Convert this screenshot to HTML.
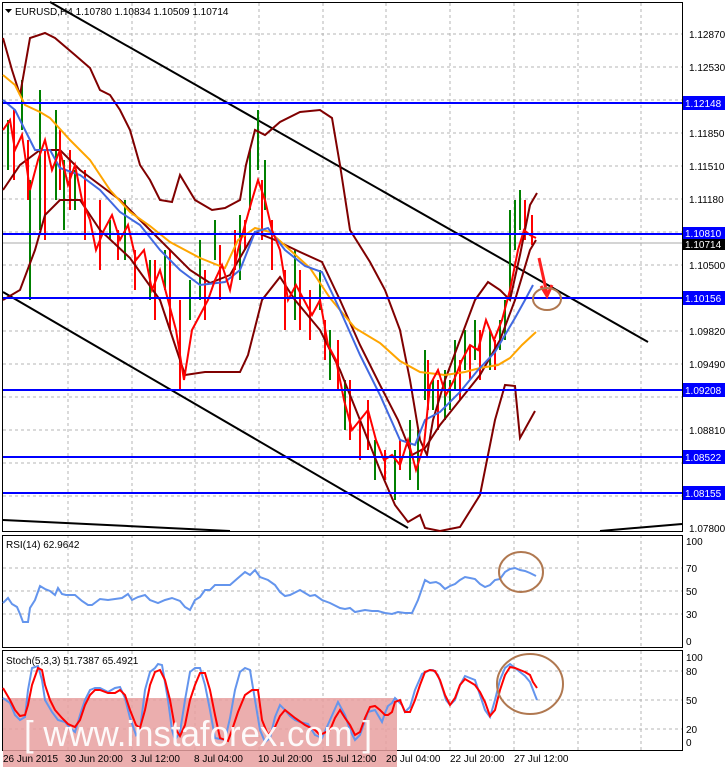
<!DOCTYPE html>
<html><head><meta charset="utf-8"><style>
html,body{margin:0;padding:0;background:#fff;width:725px;height:767px;overflow:hidden}
svg{display:block}
text{font-family:"Liberation Sans",sans-serif}
</style></head><body>
<svg width="725" height="767" viewBox="0 0 725 767" xmlns="http://www.w3.org/2000/svg">
<rect width="725" height="767" fill="#fff"/>
<g stroke="#b4b4b4" stroke-dasharray="3,3" stroke-width="1" fill="none">
<path d="M68 3V531M132 3V531M195 3V531M259 3V531M323 3V531M386 3V531M450 3V531M514 3V531M578 3V531M641 3V531"/>
<path d="M3 34H682M3 67H682M3 100H682M3 133H682M3 166H682M3 199H682M3 232H682M3 265H682M3 298H682M3 331H682M3 364H682M3 397H682M3 430H682M3 463H682M3 496H682"/>
<path d="M68 535V647M132 535V647M195 535V647M259 535V647M323 535V647M386 535V647M450 535V647M514 535V647M578 535V647M641 535V647"/>
<path d="M3 568H682M3 591H682M3 614H682"/>
<path d="M68 651V750M132 651V750M195 651V750M259 651V750M323 651V750M386 651V750M450 651V750M514 651V750M578 651V750M641 651V750"/>
<path d="M3 671H682M3 700H682M3 729H682"/>
</g>
<g stroke="#000" fill="none" stroke-width="1">
<rect x="2.5" y="2.5" width="680" height="529"/>
<rect x="2.5" y="535.5" width="680" height="112"/>
<rect x="2.5" y="650.5" width="680" height="100"/>
</g>
<path d="M3 243H682" stroke="#aaa" stroke-width="1"/>
<g stroke="#000" stroke-width="2" fill="none">
<path d="M50 2L648 342"/>
<path d="M3 292L408 528"/>
<path d="M3 520L230 531"/>
<path d="M600 531L682 524"/>
</g>
<g stroke-width="2" fill="none">
<path stroke="#008000" d="M8 120V170M22 80V130M30 180V300M40 90V230M56 110V200M64 160V230M75 170V210M110 220V240M125 200V260M150 260V300M165 250V290M190 280V320M200 240V300M215 220V260M240 215V280M250 150V210M258 110V170M265 160V210M295 250V320M320 270V310M330 330V380M345 380V430M375 440V480M395 450V500M410 420V480M418 430V490M425 350V400M433 380V410M445 370V420M450 380V410M455 340V390M465 330V370M475 320V360M490 330V370M500 320V350M505 300V340M510 210V300M515 200V250M520 190V230"/>
<path stroke="#ff0000" d="M14 110V180M28 140V200M45 150V240M60 130V190M70 150V210M85 170V240M100 200V270M118 230V260M135 250V290M155 260V320M170 250V330M180 300V390M205 270V320M220 245V300M235 230V270M245 220V250M262 180V240M272 220V270M285 270V330M300 270V330M310 290V340M325 320V360M338 340V390M350 380V440M360 420V460M368 400V450M385 450V480M400 440V470M428 360V410M438 380V430M460 360V400M470 345V380M480 330V380M495 340V370M525 200V240M532 215V245"/>
</g>
<g stroke="#800000" stroke-width="2" fill="none">
<path d="M3 38L12 70L20 95L30 38L45 33L55 38L75 55L90 68L100 90L110 95L120 110L130 130L140 165L150 180L160 200L172 202L180 175L195 200L212 210L225 208L240 200L246 165L255 130L265 135L280 122L300 112L320 110L332 118L340 165L350 230L370 262L385 290L400 330L410 380L420 440L427 455L433 420L445 380L460 340L475 300L488 282L500 290L510 300L520 255L530 205L537 193"/>
<path d="M3 190L20 165L40 150L60 150L80 170L100 185L120 200L140 220L160 240L190 270L210 283L230 275L255 232L275 240L300 252L322 262L340 300L360 345L380 385L398 420L412 455L425 448L440 425L460 400L480 375L500 340L515 300L530 250L536 240"/>
<path d="M3 300L20 290L35 250L45 215L60 200L80 200L100 230L130 258L160 300L175 345L185 375L205 372L240 372L248 355L262 300L280 277L295 300L320 330L340 370L360 420L380 470L395 505L408 522L420 515L425 528L440 531L460 527L480 495L495 420L505 385L515 386L520 438L535 411"/>
</g>
<path d="M3 75L15 85L25 105L40 112L50 118L70 140L90 160L110 190L130 212L150 226L170 242L200 258L225 268L238 240L255 228L270 232L290 250L310 268L330 298L355 328L380 343L400 361L420 372L445 375L465 372L480 368L498 365L510 358L522 345L536 332" stroke="#ffa500" stroke-width="2" fill="none"/>
<path d="M3 100L15 110L25 130L35 150L50 150L60 168L80 175L100 190L120 212L140 225L160 250L180 270L200 285L225 282L240 270L255 232L268 228L285 250L305 266L322 272L340 310L360 355L380 395L400 440L415 445L425 420L440 412L460 392L478 370L495 352L515 318L525 300L533 285" stroke="#4169e1" stroke-width="2" fill="none"/>
<path d="M3 130L10 120L15 150L22 135L30 190L38 160L45 140L52 170L60 150L68 185L75 165L82 200L90 220L96 250L104 230L112 215L120 240L128 225L136 260L144 250L152 290L160 270L168 300L176 330L184 380L192 330L200 315L208 300L215 280L222 265L230 290L238 250L245 225L252 200L258 180L265 200L272 230L280 250L288 300L296 285L304 300L312 315L320 300L328 345L336 360L344 400L352 430L360 420L368 410L376 440L384 460L392 455L400 465L408 440L416 470L424 445L430 385L438 370L446 395L454 380L462 360L470 345L478 350L486 320L494 340L502 320L510 290L518 250L524 230L530 235L536 238" stroke="#ff0000" stroke-width="2" fill="none"/>
<g stroke="#0000ff" stroke-width="2">
<path d="M3 103H682M3 234H682M3 298H682M3 390H682M3 457H682M3 493H682"/>
</g>
<path d="M539 258L547 294M541 286L547 296L552 285" stroke="#ff2020" stroke-width="3" fill="none"/>
<ellipse cx="547" cy="299" rx="14" ry="11" fill="none" stroke="#b07850" stroke-width="2"/>
<path d="M5 9h7l-3.5 4z" fill="#000"/>
<text x="15" y="15" font-size="10" fill="#000">EURUSD,H4  1.10780 1.10834 1.10509 1.10714</text>
<g font-size="10" fill="#000">
<text x="689" y="38">1.12870</text>
<text x="689" y="71">1.12530</text>
<text x="689" y="137">1.11850</text>
<text x="689" y="170">1.11510</text>
<text x="689" y="203">1.11180</text>
<text x="689" y="269">1.10500</text>
<text x="689" y="335">1.09820</text>
<text x="689" y="368">1.09490</text>
<text x="689" y="434">1.08810</text>
<text x="689" y="532">1.07800</text>
</g>
<g font-size="10" fill="#fff">
<rect x="683" y="96" width="42" height="14" fill="#0000ff"/><text x="685" y="107">1.12148</text>
<rect x="683" y="227" width="42" height="13" fill="#0000ff"/><text x="685" y="237">1.10810</text>
<rect x="683" y="239" width="42" height="11" fill="#000"/><text x="685" y="248">1.10714</text>
<rect x="683" y="291" width="42" height="14" fill="#0000ff"/><text x="685" y="302">1.10156</text>
<rect x="683" y="383" width="42" height="14" fill="#0000ff"/><text x="685" y="394">1.09208</text>
<rect x="683" y="450" width="42" height="14" fill="#0000ff"/><text x="685" y="461">1.08522</text>
<rect x="683" y="486" width="42" height="14" fill="#0000ff"/><text x="685" y="497">1.08155</text>
</g>
<text x="6" y="548" font-size="10" fill="#000">RSI(14) 62.9642</text>
<g font-size="10" fill="#000"><text x="686" y="545">100</text><text x="686" y="572">70</text><text x="686" y="595">50</text><text x="686" y="618">30</text><text x="686" y="645">0</text></g>
<path d="M3 603L8 598L12 604L17 607L20 614L23 622L28 622L30 608L35 600L40 586L45 589L50 591L55 595L58 588L62 594L66 595L75 595L82 601L88 605L92 605L100 599L108 600L115 599L122 598L128 594L132 600L138 597L145 595L150 600L158 603L165 600L172 598L180 601L185 607L190 610L195 600L200 597L205 590L210 590L215 585L222 585L230 585L238 578L245 572L250 575L255 570L260 577L268 580L275 585L280 592L285 596L290 595L300 590L310 596L315 595L322 600L330 603L340 608L345 609L350 608L355 612L360 611L365 610L372 611L378 611L385 613L392 614L398 612L405 613L412 613L418 600L425 580L430 583L436 582L440 584L445 589L450 586L455 584L460 580L465 577L470 578L475 579L480 584L485 587L490 585L495 580L500 579L505 572L510 569L515 568L520 570L525 571L530 573L536 576" stroke="#6495ed" stroke-width="2" fill="none"/>
<ellipse cx="521" cy="572" rx="22" ry="20" fill="none" stroke="#b07850" stroke-width="2"/>
<rect x="3" y="698" width="394" height="69" fill="#e8a0a0" opacity="0.85"/>
<text x="6" y="664" font-size="10" fill="#000">Stoch(5,3,3) 51.7387 65.4921</text>
<g font-size="10" fill="#000"><text x="686" y="661">100</text><text x="686" y="675">80</text><text x="686" y="704">50</text><text x="686" y="733">20</text><text x="686" y="746">0</text></g>
<path d="M3 698L10 703L15 715L20 720L25 717L28 690L32 668L38 666L42 680L45 700L52 712L58 720L65 722L70 728L75 732L80 715L85 700L90 690L95 688L100 688L108 692L115 688L120 687L125 698L130 718L136 735L140 730L145 690L150 672L155 668L158 664L162 665L168 700L172 730L175 740L180 732L185 700L190 672L195 668L200 668L205 685L210 710L215 738L225 740L230 718L235 690L240 672L245 668L250 670L255 700L260 730L265 742L270 738L275 717L280 705L285 710L290 716L295 720L300 722L308 724L315 735L322 738L330 720L338 702L345 715L350 730L355 740L360 735L368 712L375 710L382 722L385 713L388 706L392 703L395 698L402 705L405 712L410 707L415 690L422 674L430 670L433 670L438 675L443 690L446 700L450 705L455 700L460 685L465 676L470 678L475 680L480 695L485 710L490 717L495 700L500 680L505 668L510 664L515 668L520 672L525 676L530 682L535 695L537 700" stroke="#6495ed" stroke-width="2" fill="none"/>
<path d="M3 688L10 700L15 710L20 716L25 715L28 705L32 685L38 668L42 670L45 685L50 700L55 710L62 718L68 724L75 727L80 720L85 705L90 695L95 690L100 690L108 693L115 693L120 690L125 695L130 710L136 725L140 728L145 710L150 685L155 672L160 670L165 680L170 700L175 728L180 736L185 725L190 700L195 685L200 673L205 673L210 690L215 715L220 738L228 741L232 730L238 712L245 695L252 690L258 690L262 720L268 735L275 727L280 716L285 710L295 718L305 725L315 730L320 735L330 730L335 718L340 710L345 718L350 725L355 735L360 732L365 718L370 707L375 706L380 710L385 715L388 715L392 712L395 702L400 700L405 712L410 712L415 700L420 685L425 672L430 670L435 671L440 680L445 695L450 705L455 698L460 685L465 679L470 682L475 685L480 692L485 702L490 716L495 710L500 690L505 675L510 667L515 668L520 670L525 672L530 675L533 682L537 688" stroke="#ff0000" stroke-width="2" fill="none"/>
<ellipse cx="530" cy="684" rx="33" ry="30" fill="none" stroke="#b07850" stroke-width="2"/>
<text x="24" y="746" font-size="36" fill="#ffffff" opacity="0.95" textLength="348" lengthAdjust="spacingAndGlyphs">[ www.instaforex.com ]</text>
<g font-size="10" fill="#000">
<text x="3" y="762">26 Jun 2015</text>
<text x="65" y="762">30 Jun 20:00</text>
<text x="131" y="762">3 Jul 12:00</text>
<text x="194" y="762">8 Jul 04:00</text>
<text x="258" y="762">10 Jul 20:00</text>
<text x="322" y="762">15 Jul 12:00</text>
<text x="386" y="762">20 Jul 04:00</text>
<text x="450" y="762">22 Jul 20:00</text>
<text x="514" y="762">27 Jul 12:00</text>
</g>
</svg>
</body></html>
